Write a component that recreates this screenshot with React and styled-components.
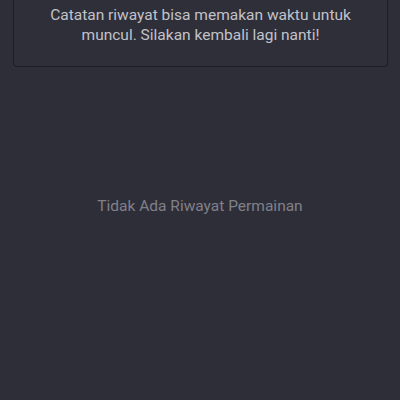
import React from "react";
import styled, { createGlobalStyle } from "styled-components";

const Global = createGlobalStyle`
  html, body { margin: 0; padding: 0; background: #2e2e38; }
  body { font-family: Roboto, "Noto Sans", sans-serif; }
`;

const Page = styled.div`
  display: flex;
  flex-direction: column;
  min-height: 400px;
  background: #2e2e38;
`;

const Notice = styled.div`
  margin: 0 12px 0 13px;
  padding: 5px 16px 21px;
  border: 1px solid #1e1e25;
  border-top: none;
  border-radius: 0 0 4px 4px;
  background: #2f2f39;
  color: #c2c2ca;
  font-size: 15.5px;
  line-height: 20px;
  text-align: center;
`;

const Empty = styled.div`
  margin-top: 129px;
  color: #80808a;
  font-size: 15.5px;
  line-height: 20px;
  text-align: center;
`;

export default function App() {
  return (
    <>
      <Global />
      <Page>
        <Notice>
          Catatan riwayat bisa memakan waktu untuk
          <br />
          muncul. Silakan kembali lagi nanti!
        </Notice>
        <Empty>Tidak Ada Riwayat Permainan</Empty>
      </Page>
    </>
  );
}
